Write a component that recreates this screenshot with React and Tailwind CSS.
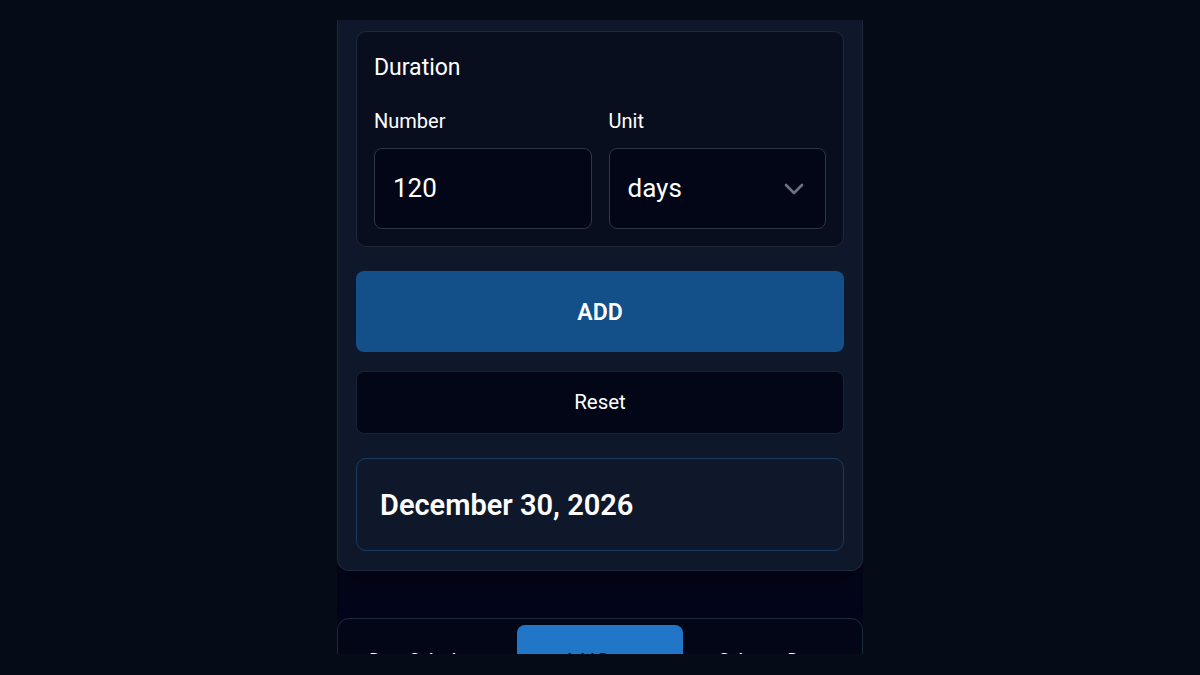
const tabs = ['Date Calculator', 'Add Days', 'Subtract Days'];

export default function App() {
  return (
    <div
      className="w-full h-[675px] bg-[#060b18] flex flex-col items-center overflow-hidden text-white"
      style={{ fontFamily: 'Roboto, "Noto Sans", sans-serif' }}
    >
      <div className="h-[20px] w-full shrink-0 bg-[#060b18]" />

      <div className="h-[634px] w-[526px] shrink-0 overflow-hidden bg-[#03061a] flex flex-col">
        {/* calculator panel */}
        <div className="bg-[#0f172a] border border-t-0 border-[#1e293b] rounded-b-xl px-[18px] pt-[11px] pb-[19px] shadow-[0_12px_30px_rgba(0,0,0,0.35)]">
          <div className="bg-[#090e1f] border border-[#1f2937] rounded-[10px] px-[17px] pt-[22px] pb-[17px]">
            <h3 className="text-[23px] leading-[28px] font-normal text-white">Duration</h3>

            <div className="mt-[27px] grid grid-cols-2 gap-[17px]">
              <div>
                <label className="block text-[20px] leading-[24px] font-normal text-white">Number</label>
                <div className="mt-[15px] h-[81px] bg-[#020617] border border-[#2d3748] rounded-lg flex items-center pl-[18px]">
                  <span className="text-[26px] text-white">120</span>
                </div>
              </div>
              <div>
                <label className="block text-[20px] leading-[24px] font-normal text-white">Unit</label>
                <div className="mt-[15px] h-[81px] bg-[#020617] border border-[#2d3748] rounded-lg flex items-center justify-between pl-[18px] pr-[21px]">
                  <span className="text-[26px] text-white">days</span>
                  <svg width="20" height="12" viewBox="0 0 20 12" fill="none">
                    <polyline
                      points="2,2 10,10 18,2"
                      stroke="#6b7280"
                      strokeWidth="2.6"
                      strokeLinecap="round"
                      strokeLinejoin="round"
                    />
                  </svg>
                </div>
              </div>
            </div>
          </div>

          <button className="mt-[24px] w-full h-[81px] bg-[#135089] rounded-lg text-[23px] font-semibold text-white pt-[3px]">
            ADD
          </button>

          <button className="mt-[19px] w-full h-[63px] bg-[#020617] border border-[#1a2333] rounded-lg text-[20.5px] text-white">
            Reset
          </button>

          <div className="mt-[24px] h-[93px] border border-[#1d3a5e] rounded-[10px] bg-[#0f172a] flex items-center pl-[23px] pt-[2px]">
            <span className="text-[29px] font-semibold text-white">December 30, 2026</span>
          </div>
        </div>

        {/* tab bar */}
        <div className="mt-[47px] bg-[#030616] border border-[#1e293b] rounded-xl px-[7px] pt-[6px] grid grid-cols-3 gap-[6px]">
          {tabs.map((t, i) => (
            <div
              key={t}
              className={
                i === 1
                  ? 'h-[70px] rounded-t-lg bg-[#2176c7] flex items-center justify-center text-[17px] font-medium text-[#0b1220]'
                  : 'h-[70px] flex items-center justify-center text-[17px] font-medium text-white'
              }
            >
              {t}
            </div>
          ))}
        </div>
      </div>

      <div className="h-[21px] w-full shrink-0 bg-[#060b18]" />
    </div>
  );
}
